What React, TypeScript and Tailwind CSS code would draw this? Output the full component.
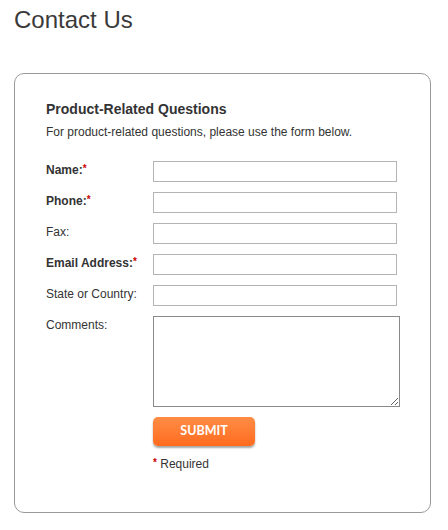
import React from "react";

type Field = { label: string; required?: boolean };

const FIELDS: Field[] = [
  { label: "Name:", required: true },
  { label: "Phone:", required: true },
  { label: "Fax:" },
  { label: "Email Address:", required: true },
  { label: "State or Country:" },
];

function Star() {
  return <span className="relative top-[-2px] text-[10px] font-bold text-[#cc0000]">*</span>;
}

export default function App() {
  return (
    <div className="min-h-[530px] w-[448px] bg-white px-[14px] pt-[6px] font-['Liberation_Sans',Arial,sans-serif] text-[#333]">
      <h1 className="text-[24px] leading-[28px] text-[#3a3a3a]">Contact Us</h1>

      <section className="mt-[39px] w-[417px] rounded-[10px] border border-[#9a9a9a] pb-[40px] pl-[31px] pr-[30px] pt-[27px]">
        <h2 className="text-[14px] font-bold leading-[16px] text-[#333]">Product-Related Questions</h2>
        <p className="mt-[8px] text-[12px] leading-[14px]">For product-related questions, please use the form below.</p>

        <div className="mt-[22px] flex flex-col gap-[10px]">
          {FIELDS.map((f) => (
            <label key={f.label} className="flex items-start">
              <span className={`w-[107px] pt-[2px] text-[12px] leading-[14px] ${f.required ? "font-bold" : ""}`}>
                {f.label}
                {f.required && <Star />}
              </span>
              <input type="text" className="h-[21px] w-[244px] border border-[#b4b4b4] bg-white outline-none" />
            </label>
          ))}

          <label className="flex items-start">
            <span className="w-[107px] pt-[2px] text-[12px] leading-[14px]">Comments:</span>
            <textarea className="h-[91px] w-[247px] resize border border-[#8a8a8a] bg-white outline-none" />
          </label>
        </div>

        <div className="ml-[107px]">
          <button
            type="button"
            className="mt-[10px] h-[29px] w-[102px] rounded-[5px] bg-gradient-to-b from-[#ff8c45] to-[#ff6b1c] font-['Lato',sans-serif] text-[12.5px] font-bold text-white shadow-[0_2px_2px_rgba(0,0,0,0.35)]"
          >
            SUBMIT
          </button>
          <p className="mt-[11px] text-[12px] leading-[14px]">
            <Star /> Required
          </p>
        </div>
      </section>
    </div>
  );
}
